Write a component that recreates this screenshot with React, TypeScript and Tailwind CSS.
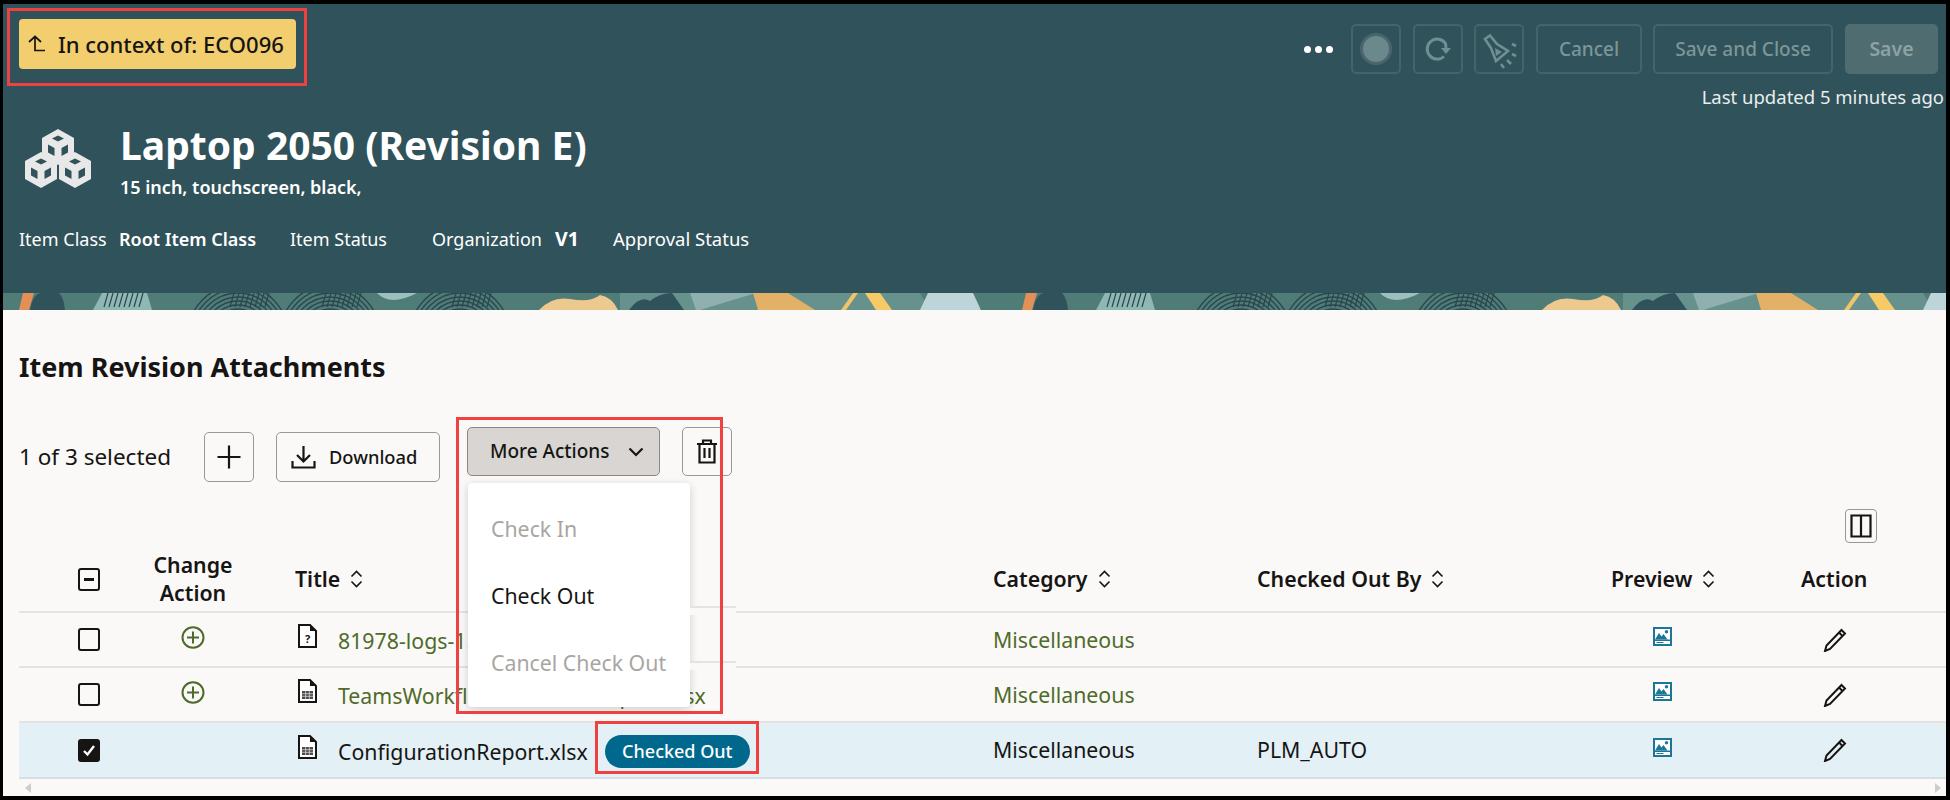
import React from 'react';

const RED = 'border-[3px] border-[#f0403f]';

function Band() {
    // the tile repeats every 1003px along the strip
    const tile = (
        <>
            <polygon points="19,17 23,0 34,0 29,17" fill="#e28f58" />
            <path d="M30 17Q33 0 42 0L59 0Q64 5 65 17Z" fill="#30525a" />
            <polygon points="93,17 102,0 147,0 152,17" fill="#8fb7b3" />
            <path d="M377 0Q390 14 417 0Z" fill="#9cc0bd" />
            {[238, 330, 460].map((cx) =>
                [22, 26, 30, 34, 38, 42, 46, 50].map((r) => (
                    <circle key={`${cx}-${r}`} cx={cx} cy={42} r={r} fill="none" stroke="#29474d" strokeWidth="1.4" />
                )),
            )}
            {[104, 230, 322, 452].map((x0) =>
                [0, 5, 10, 15, 20, 25, 30, 35].map((d) => (
                    <line key={`${x0}-${d}`} x1={x0 + d + 4} y1="0" x2={x0 + d} y2="14" stroke="#29474d" strokeWidth="1.2" />
                )),
            )}
            <polygon points="620,0 920,0 930,17 620,17" fill="#66918d" />
            <path d="M539 17Q552 3 570 6Q590 10 600 2Q612 4 618 17Z" fill="#edc98f" />
            <path d="M629 17Q640 2 650 8Q660 0 672 0L684 17Z" fill="#30525a" />
            <polygon points="690,0 756,0 700,17 696,17" fill="#8fb0ae" />
            <polygon points="753,0 788,0 815,17 758,17" fill="#e2b066" />
            <polygon points="853,0 858,0 846,17 841,17" fill="#f0c468" />
            <polygon points="865,0 880,0 892,17 876,17" fill="#f6ca67" />
            <polygon points="928,0 973,0 981,17 920,17" fill="#bdd4d8" />
            <polygon points="981,17 975,0 1003,0 1003,17" fill="#507c78" />
        </>
    );
    return (
        <svg width="1943" height="17" viewBox="3 0 1943 17" className="block shrink-0 bg-[#507c78]">
            <g>{tile}</g>
            <g transform="translate(1003 0)">{tile}</g>
        </svg>
    );
}

function Cubes() {
    const cube = (x: number, y: number) => (
        <g transform={`translate(${x} ${y})`}>
            <polygon points="0,-18 16,-9 16,9 0,18 -16,9 -16,-9" fill="#e8e8e8" />
            <polygon points="0,-11.5 6,-8.5 0,-5.5 -6,-8.5" fill="#30525a" />
            <polygon points="-10,-2.5 -3.5,1 -3.5,9 -10,5.5" fill="#30525a" />
            <polygon points="10,-2.5 3.5,1 3.5,9 10,5.5" fill="#30525a" />
        </g>
    );
    return (
        <svg width="66" height="60" viewBox="0 0 66 60" className="shrink-0">
            {cube(33, 18)}
            {cube(16, 41)}
            {cube(50, 41)}
        </svg>
    );
}

function Sort() {
    return (
        <svg width="15" height="18" viewBox="0 0 15 18" fill="none" stroke="#161513" strokeWidth="1.6" className="shrink-0">
            <path d="M2.5 6.5L7.5 1.5L12.5 6.5M2.5 11.5L7.5 16.5L12.5 11.5" />
        </svg>
    );
}

function Checkbox({ state }: { state: 'off' | 'some' | 'on' }) {
    return (
        <div className={`w-[22px] h-[23px] rounded-[3px] border-2 border-[#161513] flex items-center justify-center ${state === 'on' ? 'bg-[#161513]' : ''}`}>
            {state === 'some' && <div className="w-[10px] h-[3px] bg-[#161513]" />}
            {state === 'on' && (
                <svg width="14" height="13" viewBox="0 0 14 13" fill="none" stroke="#fff" strokeWidth="2.4">
                    <path d="M2 7L5.5 10.5L12 2" />
                </svg>
            )}
        </div>
    );
}

function PlusCircle() {
    return (
        <svg width="24" height="23" viewBox="0 0 24 23" fill="none" stroke="#4f6b2a" strokeWidth="2">
            <ellipse cx="12" cy="11.5" rx="10.5" ry="10.2" />
            <path d="M12 5.5V17.5M6 11.5H18" />
        </svg>
    );
}

function FileIcon({ kind }: { kind: 'unknown' | 'sheet' }) {
    return (
        <svg width="19" height="24" viewBox="0 0 19 24" className="shrink-0">
            <path d="M1 1H12L18 7V23H1Z" fill="#fff" stroke="#161513" strokeWidth="2" />
            <path d="M12 1V7H18Z" fill="#161513" />
            {kind === 'unknown' ? (
                <text x="9.5" y="19" textAnchor="middle" fontSize="11" fontWeight="700" fill="#161513" fontFamily="'Noto Sans', sans-serif">?</text>
            ) : (
                <g>
                    <rect x="4" y="12" width="11" height="8" fill="#4a4a4a" />
                    <path d="M7.7 12V20M11.3 12V20M4 14.7H15M4 17.3H15" stroke="#fff" strokeWidth="0.6" />
                </g>
            )}
        </svg>
    );
}

function PreviewIcon() {
    return (
        <svg width="19" height="19" viewBox="0 0 19 19" className="shrink-0">
            <rect width="19" height="19" fill="#1d7698" />
            <rect x="2" y="2" width="15" height="10.5" fill="#fff" />
            <path d="M2 12.5L6 6L8.5 9.5L10.5 7L14.5 12.5Z" fill="#1d7698" />
            <circle cx="13.5" cy="4.8" r="1.7" fill="#1d7698" />
            <rect x="2" y="14" width="15" height="3" fill="#fff" />
            <rect x="3.5" y="15" width="7" height="1" fill="#1d7698" />
        </svg>
    );
}

function Pencil() {
    return (
        <svg width="24" height="24" viewBox="0 0 24 24" fill="none" stroke="#161513" strokeWidth="2" className="shrink-0">
            <path d="M18.5 2L22 5.5L7 21L2 23L3.5 17.5Z" />
            <path d="M16 4.5L19.5 8" />
        </svg>
    );
}

const COLS = 'grid grid-cols-[121px_106px_747px_264px_354px_190px_1fr] items-center';

const rows = [
    { title: '81978-logs-1.txt', icon: 'unknown' as const, link: true },
    { title: 'TeamsWorkflowExecutionReport.xlsx', icon: 'sheet' as const, link: true },
    { title: 'ConfigurationReport.xlsx', icon: 'sheet' as const, link: false },
];

export default function App() {
    return (
        <div className="w-[1950px] h-[800px] bg-black pt-[4px] pl-[3px] pr-[4px] pb-[4px] font-['Noto_Sans',sans-serif] text-[#161513]">
            <div className="h-full flex flex-col bg-[#fbf9f8]">
                {/* page header */}
                <header className="h-[289px] shrink-0 bg-[#30525a] pl-[16px] pr-[2px] text-white">
                    <div className="flex justify-between items-start h-[110px]">
                        <div className="relative mt-[15px] w-[277px] h-[50px] rounded-[4px] bg-[#f2ce6f] flex items-center pl-[8px] text-[#161513]">
                            <svg width="20" height="18" viewBox="0 0 20 18" fill="none" stroke="#161513" strokeWidth="1.7" className="shrink-0">
                                <path d="M2 7L8 1.5L14 7M8 2V15.5H18" />
                            </svg>
                            <span className="ml-[11px] text-[22px] font-medium whitespace-nowrap">In context of: ECO096</span>
                            <div className={`absolute left-[-12px] top-[-11px] w-[300px] h-[78px] ${RED}`} />
                        </div>
                        <div className="flex flex-col items-end pt-[20px]">
                            <div className="flex items-center pr-[6px]">
                                <div className="flex gap-[4px] mr-[18px]">
                                    <div className="w-[7px] h-[7px] rounded-full bg-white" />
                                    <div className="w-[7px] h-[7px] rounded-full bg-white" />
                                    <div className="w-[7px] h-[7px] rounded-full bg-white" />
                                </div>
                                <div className="w-[50px] h-[50px] rounded-[5px] border-2 border-[#446469] flex items-center justify-center">
                                    <div className="w-[32px] h-[32px] rounded-full bg-[#6b898c] border-[3px] border-[#4a666b]" />
                                </div>
                                <div className="w-[50px] h-[50px] ml-[12px] rounded-[5px] border-2 border-[#446469] flex items-center justify-center">
                                    <svg width="28" height="28" viewBox="0 0 28 28" fill="none" stroke="#6f8f92" strokeWidth="3">
                                        <path d="M20 21.5A10 10 0 1 1 21.5 8.5L22 13" />
                                        <path d="M17 13H27L22 19Z" fill="#6f8f92" stroke="none" />
                                    </svg>
                                </div>
                                <div className="w-[50px] h-[50px] ml-[11px] rounded-[5px] border-2 border-[#446469] flex items-center justify-center">
                                    <svg width="46" height="46" viewBox="0 0 46 46" fill="none" stroke="#6f8f92" strokeWidth="2.6">
                                        <path d="M9 13L14 9.5L21 18L32 25L20 35L15 22Z" />
                                        <path d="M19 22L26 26L20 30Z" fill="#6f8f92" stroke="none" />
                                        <path d="M36 18L40 20M36 28L40 30M31 34L35 38M25 38L28 42" />
                                    </svg>
                                </div>
                                <div className="w-[106px] h-[50px] ml-[12px] rounded-[5px] border-2 border-[#446469] flex items-center justify-center text-[19px] font-medium text-[#7c9699]">Cancel</div>
                                <div className="w-[180px] h-[50px] ml-[11px] rounded-[5px] border-2 border-[#446469] flex items-center justify-center text-[19px] font-medium text-[#7c9699]">Save and Close</div>
                                <div className="w-[93px] h-[50px] ml-[12px] rounded-[5px] bg-[#4f6d71] flex items-center justify-center text-[19.5px] font-semibold text-[#8ca2a5]">Save</div>
                            </div>
                            <div className="mt-[10px] text-[18.5px] leading-[26px] text-[#e8eeee] whitespace-nowrap">Last updated 5 minutes ago</div>
                        </div>
                    </div>
                    <div className="flex items-start mt-[15px] ml-[6px]">
                        <Cubes />
                        <div className="ml-[29px]">
                            <h1 className="mt-[-9px] text-[39px] leading-[50px] font-bold whitespace-nowrap">Laptop 2050 (Revision E)</h1>
                            <div className="mt-[5px] text-[18px] leading-[24px] font-semibold whitespace-nowrap">15 inch, touchscreen, black,</div>
                        </div>
                    </div>
                    <div className="flex items-center mt-[27px] text-[18px] leading-[26px] whitespace-nowrap">
                        <span className="w-[100px]">Item Class</span>
                        <span className="w-[171px] font-semibold">Root Item Class</span>
                        <span className="w-[142px]">Item Status</span>
                        <span className="w-[123px]">Organization</span>
                        <span className="w-[58px] font-bold text-[19.5px]">V1</span>
                        <span className="text-[18.5px]">Approval Status</span>
                    </div>
                </header>
                <Band />

                {/* attachments */}
                <main className="flex-1 min-h-0 pl-[16px] flex flex-col">
                    <h2 className="mt-[42px] text-[27px] leading-[30px] font-bold whitespace-nowrap">Item Revision Attachments</h2>
                    <div className="flex items-start mt-[45px] h-[55px]">
                        <div className="w-[185px] h-[55px] pt-[5px] flex items-center text-[22.5px]">1 of 3 selected</div>
                        <button className="mt-[5px] w-[50px] h-[50px] rounded-[5px] border border-[#9a9794] flex items-center justify-center">
                            <svg width="26" height="26" viewBox="0 0 26 26" fill="none" stroke="#161513" strokeWidth="2.2"><path d="M13 1.5V24.5M1.5 13H24.5" /></svg>
                        </button>
                        <button className="mt-[5px] ml-[22px] w-[164px] h-[50px] rounded-[5px] border border-[#9a9794] flex items-center pl-[14px]">
                            <svg width="25" height="24" viewBox="0 0 25 24" fill="none" stroke="#161513" strokeWidth="2.2"><path d="M12.5 1V16M6 10L12.5 16.5L19 10M1.5 16V22.5H23.5V16" /></svg>
                            <span className="ml-[13px] text-[18.3px] font-medium">Download</span>
                        </button>
                        <div className="relative ml-[27px]">
                            <button className="w-[193px] h-[49px] rounded-[5px] bg-[#d8d5d2] border border-[#8a8784] flex items-center pl-[22px] text-[19px] font-medium">
                                <span>More Actions</span>
                                <svg width="16" height="10" viewBox="0 0 16 10" fill="none" stroke="#161513" strokeWidth="2.2" className="ml-[18px]"><path d="M1.5 1.5L8 8L14.5 1.5" /></svg>
                            </button>
                            <div className="absolute z-10 left-[1px] top-[56px] w-[222px] h-[224px] bg-white rounded-[4px] shadow-[0_2px_8px_rgba(0,0,0,0.18)] pt-[12px] pl-[23px] text-[21.3px]">
                                <div className="h-[67px] flex items-center text-[#a8a6a3]">Check In</div>
                                <div className="h-[67px] flex items-center">Check Out</div>
                                <div className="h-[67px] flex items-center text-[#a8a6a3] whitespace-nowrap">Cancel Check Out</div>
                                <div className="absolute left-[222px] top-[123px] w-[46px] h-[9px] bg-[#fbf9f8] border-t-2 border-[#e5e3e1]" />
                                <div className="absolute left-[222px] top-[178px] w-[46px] h-[9px] bg-[#fbf9f8] border-t-2 border-[#e5e3e1]" />
                            </div>
                            <div className={`absolute z-20 left-[-11px] top-[-10px] w-[267px] h-[297px] ${RED}`} />
                        </div>
                        <button className="ml-[22px] w-[50px] h-[49px] rounded-[5px] border border-[#9a9794] flex items-center justify-center">
                            <svg width="22" height="25" viewBox="0 0 22 25" fill="none" stroke="#161513" strokeWidth="2.2"><path d="M1 5H21M7 5V1.5H15V5M3.5 5V23.5H18.5V5M8.5 9V19M13.5 9V19" /></svg>
                        </button>
                    </div>
                    <div className="flex justify-end pr-[69px] mt-[27px] h-[34px]">
                        <button className="w-[32px] h-[34px] rounded-[4px] border border-[#9a9794] flex items-center justify-center">
                            <svg width="22" height="24" viewBox="0 0 22 24" fill="none" stroke="#161513" strokeWidth="2.2"><path d="M1.5 1.5H20.5V22.5H1.5ZM11 1.5V22.5" /></svg>
                        </button>
                    </div>

                    <div className={`${COLS} h-[70px] pt-[4px] border-b-2 border-[#e5e3e1] text-[21.3px] font-semibold`}>
                        <div className="pl-[59px]"><Checkbox state="some" /></div>
                        <div className="text-center leading-[28px]">Change<br />Action</div>
                        <div className="pl-[49px] flex items-center gap-[9px]">Title <Sort /></div>
                        <div className="flex items-center gap-[9px]">Category <Sort /></div>
                        <div className="flex items-center gap-[9px]">Checked Out By <Sort /></div>
                        <div className="flex items-center gap-[9px]">Preview <Sort /></div>
                        <div>Action</div>
                    </div>

                    {rows.map((row, i) => {
                        const selected = i === 2;
                        return (
                            <div key={row.title} className={`${COLS} ${selected ? 'h-[56px] bg-[#e3f0f6] border-[#d5dfe5]' : 'h-[55px] border-[#e5e3e1]'} border-b-2 text-[21.3px]`}>
                                <div className="pl-[59px]"><Checkbox state={selected ? 'on' : 'off'} /></div>
                                <div className="flex justify-center pb-[5px]">{!selected && <PlusCircle />}</div>
                                <div className="pl-[52px] flex items-center whitespace-nowrap">
                                    <div className="mb-[7px]"><FileIcon kind={row.icon} /></div>
                                    <span className={`ml-[21px] mt-[3px] ${row.link ? 'text-[#4f6b2a]' : ''}`}>{row.title}</span>
                                    {selected && (
                                        <span className="relative ml-[17px] mt-[3px] w-[145px] h-[33px] rounded-full bg-[#00688c] text-white text-[18px] font-medium flex items-center justify-center">
                                            Checked Out
                                            <span className={`absolute left-[-10px] top-[-14px] w-[164px] h-[53px] ${RED}`} />
                                        </span>
                                    )}
                                </div>
                                <div className={row.link ? 'text-[#4f6b2a]' : ''}>Miscellaneous</div>
                                <div>{selected ? 'PLM_AUTO' : ''}</div>
                                <div className="pl-[42px] pb-[6px]"><PreviewIcon /></div>
                                <div className="pl-[22px]"><Pencil /></div>
                            </div>
                        );
                    })}

                    <div className="flex-1 flex items-center justify-between pl-[6px] pr-[5px]">
                        <div className="w-0 h-0 border-y-[5px] border-y-transparent border-r-[6px] border-r-[#cfcdca]" />
                        <div className="w-0 h-0 border-y-[5px] border-y-transparent border-l-[6px] border-l-[#cfcdca]" />
                    </div>
                </main>
            </div>
        </div>
    );
}
